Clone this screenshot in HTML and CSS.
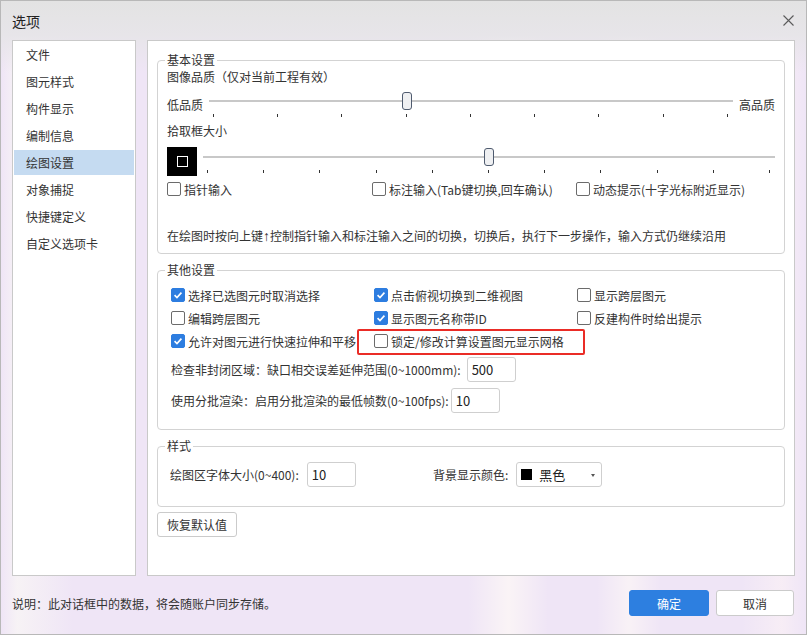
FILE: index.html
```html
<!DOCTYPE html>
<html lang="zh-CN">
<head>
    <meta charset="UTF-8">
    <title>选项</title>
    <link rel="stylesheet" href="styles.css">
</head>
<body>

    <div class="window">

        <div class="titlebar">
            <span class="title">选项</span>
            <svg class="close-icon" width="11" height="11" viewBox="0 0 11 11">
                <path d="M0.5 0.5 L10.5 10.5 M10.5 0.5 L0.5 10.5" stroke="#5a5a5a" stroke-width="1.1" fill="none"/>
            </svg>
        </div>

        <div class="main">
            <ul class="nav">
                <li class="nav-item">文件</li>
                <li class="nav-item">图元样式</li>
                <li class="nav-item">构件显示</li>
                <li class="nav-item">编制信息</li>
                <li class="nav-item active">绘图设置</li>
                <li class="nav-item">对象捕捉</li>
                <li class="nav-item">快捷键定义</li>
                <li class="nav-item">自定义选项卡</li>
            </ul>

            <div class="panel">

                <fieldset class="group">
                    <legend>基本设置</legend>
                    <div class="group-body basic-body">
                        <div class="caption">图像品质（仅对当前工程有效）</div>

                        <div class="slider-row">
                            <span class="slider-label">低品质</span>
                            <div class="slider">
                                <div class="track"></div>
                                <div class="ticks">
                                    <i></i><i></i><i></i><i></i><i></i><i></i><i></i><i></i><i></i>
                                </div>
                                <div class="thumb" style="left: calc((100% - 10px) * 0.375);"></div>
                            </div>
                            <span class="slider-label">高品质</span>
                        </div>

                        <div class="caption caption-pick">拾取框大小</div>

                        <div class="slider-row picker-row">
                            <div class="pick-preview"><span class="pick-square"></span></div>
                            <div class="slider">
                                <div class="track"></div>
                                <div class="ticks">
                                    <i></i><i></i><i></i><i></i><i></i><i></i><i></i><i></i><i></i><i></i><i></i>
                                </div>
                                <div class="thumb" style="left: calc((100% - 10px) * 0.5);"></div>
                            </div>
                        </div>

                        <div class="check-grid basic-checks">
                            <label class="check"><span class="box"></span>指针输入</label>
                            <label class="check"><span class="box"></span>标注输入(Tab键切换,回车确认)</label>
                            <label class="check"><span class="box"></span>动态提示(十字光标附近显示)</label>
                        </div>

                        <div class="hint">在绘图时按向上键<span class="arrow">↑</span>控制指针输入和标注输入之间的切换，切换后，执行下一步操作，输入方式仍继续沿用</div>
                    </div>
                </fieldset>

                <fieldset class="group">
                    <legend>其他设置</legend>
                    <div class="group-body other-body">
                        <div class="check-grid other-checks">
                            <label class="check"><span class="box checked"><svg viewBox="0 0 14 14"><polyline points="3,7.2 5.8,10 11,4.2"/></svg></span>选择已选图元时取消选择</label>
                            <label class="check"><span class="box checked"><svg viewBox="0 0 14 14"><polyline points="3,7.2 5.8,10 11,4.2"/></svg></span>点击俯视切换到二维视图</label>
                            <label class="check"><span class="box"></span>显示跨层图元</label>

                            <label class="check"><span class="box"></span>编辑跨层图元</label>
                            <label class="check"><span class="box checked"><svg viewBox="0 0 14 14"><polyline points="3,7.2 5.8,10 11,4.2"/></svg></span>显示图元名称带ID</label>
                            <label class="check"><span class="box"></span>反建构件时给出提示</label>

                            <label class="check"><span class="box checked"><svg viewBox="0 0 14 14"><polyline points="3,7.2 5.8,10 11,4.2"/></svg></span>允许对图元进行快速拉伸和平移</label>
                            <label class="check marked"><span class="box"></span>锁定/修改计算设置图元显示网格</label>
                        </div>

                        <div class="field-row field-row-1">
                            <span>检查非封闭区域：缺口相交误差延伸范围(0~1000mm):</span>
                            <input type="text" class="num-input" value="500">
                        </div>
                        <div class="field-row field-row-2">
                            <span>使用分批渲染：启用分批渲染的最低帧数(0~100fps):</span>
                            <input type="text" class="num-input" value="10">
                        </div>
                    </div>
                </fieldset>

                <fieldset class="group">
                    <legend>样式</legend>
                    <div class="group-body style-body">
                        <div class="field-row style-pair">
                            <span>绘图区字体大小(0~400):</span>
                            <input type="text" class="num-input" value="10">
                        </div>
                        <div class="field-row">
                            <span>背景显示颜色:</span>
                            <div class="combo">
                                <span class="swatch"></span>
                                <span class="combo-text">黑色</span>
                                <span class="combo-arrow"></span>
                            </div>
                        </div>
                    </div>
                </fieldset>

                <button class="btn reset-button">恢复默认值</button>

            </div>
        </div>

        <div class="footer">
            <span class="note">说明：此对话框中的数据，将会随账户同步存储。</span>
            <div class="actions">
                <button class="btn btn-primary">确定</button>
                <button class="btn btn-cancel">取消</button>
            </div>
        </div>

    </div>

</body>
</html>
```

FILE: styles.css
```css
body {
    margin: 0;
    font-family: "Noto Sans CJK SC", "Noto Sans", sans-serif;
    font-size: 12px;
    color: #333333;
}

.window {
    width: 807px;
    height: 635px;
    box-sizing: border-box;
    border: 1px solid #b8b8b8;
    background:
        linear-gradient(180deg, #e3e3e3 0, #e7e5e9 34px, rgba(239, 230, 246, 0) 72px),
        linear-gradient(90deg, rgba(255, 255, 255, 0) 0, rgba(250, 248, 245, 0.7) 2%, rgba(255, 255, 255, 0) 9%,
            rgba(255, 255, 255, 0) 58%, rgba(255, 250, 246, 0.7) 63%, rgba(255, 255, 255, 0) 68%,
            rgba(255, 255, 255, 0) 74%, rgba(255, 250, 246, 0.6) 78%, rgba(255, 255, 255, 0) 82%,
            rgba(255, 255, 255, 0) 92%, rgba(255, 245, 245, 0.5) 97%, rgba(255, 255, 255, 0) 100%),
        #efe5f6;
}

/* title bar */
.titlebar {
    height: 39px;
    display: flex;
    align-items: center;
    justify-content: space-between;
    padding: 0 12px 0 11px;
}

.title {
    font-size: 14px;
    color: #222222;
}

.close-icon {
    display: block;
}

/* main area */
.main {
    display: flex;
    gap: 11px;
    height: 536px;
    padding: 0 11px;
}

.nav {
    width: 124px;
    margin: 0;
    padding: 1px;
    list-style: none;
    box-sizing: border-box;
    background-color: #ffffff;
    border: 1px solid #c9c9c9;
}

.nav-item {
    height: 25px;
    line-height: 25px;
    padding-left: 12px;
    margin-bottom: 2px;
}

.nav-item.active {
    background-color: #c5dbf1;
}

.panel {
    flex: 1;
    box-sizing: border-box;
    background-color: #ffffff;
    border: 1px solid #c9c9c9;
    padding: 11px 9px 0 9px;
}

/* group boxes */
.group {
    margin: 0;
    padding: 0;
    min-width: 0;
    border: 1px solid #d3d3d3;
    border-radius: 4px;
}

.group + .group {
    margin-top: 8px;
}

.group legend {
    margin-left: 7px;
    padding: 0 2px;
    line-height: 16px;
    font-size: 12px;
}

.basic-body {
    padding: 0 9px 8px 9px;
}

.caption {
    line-height: 18px;
}

.caption-pick {
    margin-top: 4px;
}

/* sliders */
.slider-row {
    display: flex;
    align-items: center;
    gap: 6px;
    margin-top: 6px;
}

.slider-label {
    line-height: 18px;
    flex-shrink: 0;
}

.slider {
    flex: 1;
    position: relative;
    height: 26px;
}

.track {
    margin-top: 8px;
    height: 2px;
    background-color: #c8c8c8;
}

.ticks {
    display: flex;
    justify-content: space-between;
    margin-top: 12px;
    padding: 0 5px 0 4px;
}

.ticks i {
    display: block;
    width: 1px;
    height: 3px;
    background-color: #333333;
}

.thumb {
    position: absolute;
    top: 0;
    width: 10px;
    height: 18px;
    box-sizing: border-box;
    border: 1.5px solid #4f5b6f;
    border-radius: 3px;
    background-color: #eff0f2;
}

.picker-row {
    margin-top: 6px;
    height: 30px;
}

.pick-preview {
    width: 30px;
    height: 29px;
    background-color: #000000;
    display: flex;
    align-items: center;
    justify-content: center;
    flex-shrink: 0;
}

.pick-square {
    width: 9px;
    height: 9px;
    border: 1.5px solid #ffffff;
}

/* checkboxes */
.check-grid {
    display: grid;
    row-gap: 5px;
}

.basic-checks {
    grid-template-columns: 205px 204px 1fr;
    margin-top: 4px;
}

.other-checks {
    grid-template-columns: 203px 203px 1fr;
}

.check {
    display: flex;
    align-items: center;
    height: 18px;
    white-space: nowrap;
    position: relative;
}

.box {
    width: 14px;
    height: 14px;
    box-sizing: border-box;
    border: 1px solid #6b6b6b;
    border-radius: 2px;
    background-color: #ffffff;
    margin-right: 3px;
    flex-shrink: 0;
}

.box.checked {
    background-color: #2d7de0;
    border-color: #2d7de0;
}

.box svg {
    display: block;
    width: 12px;
    height: 12px;
}

.box polyline {
    fill: none;
    stroke: #ffffff;
    stroke-width: 1.9;
}

.check.marked::after {
    content: "";
    position: absolute;
    left: -17px;
    top: -3px;
    width: 228px;
    height: 26px;
    box-sizing: border-box;
    border: 2px solid #ea2c26;
    border-radius: 2px;
}

.hint {
    margin-top: 29px;
    line-height: 18px;
}

.arrow {
    font-family: "Liberation Sans", sans-serif;
    font-size: 14px;
    line-height: 1;
}

/* other settings */
.other-body {
    padding: 8px 9px 16px 13px;
}

.field-row {
    display: flex;
    align-items: center;
    gap: 3px;
    margin-top: 7px;
    white-space: nowrap;
}

.field-row-1 {
    gap: 6px;
}

.field-row-2 {
    margin-top: 6px;
    gap: 2px;
}

.num-input {
    width: 49px;
    height: 25px;
    box-sizing: border-box;
    border: 1px solid #cfcfcf;
    border-radius: 3px;
    padding: 0 4px;
    font-family: "Noto Sans CJK SC", "Noto Sans", sans-serif;
    font-size: 13px;
    color: #222222;
    background-color: #ffffff;
}

/* style */
.style-body {
    display: flex;
    padding: 8px 9px 19px 12px;
}

.style-body .field-row {
    margin-top: 0;
    gap: 8px;
}

.style-pair {
    width: 263px;
}

.combo {
    width: 86px;
    height: 25px;
    box-sizing: border-box;
    border: 1px solid #cfcfcf;
    border-radius: 3px;
    display: flex;
    align-items: center;
    padding: 0 0 0 4px;
    position: relative;
}

.swatch {
    width: 11px;
    height: 11px;
    background-color: #000000;
    margin-right: 7px;
}

.combo-text {
    font-size: 13px;
    color: #222222;
}

.combo-arrow {
    position: absolute;
    right: 6px;
    top: 11px;
    width: 0;
    height: 0;
    border-left: 2.5px solid transparent;
    border-right: 2.5px solid transparent;
    border-top: 3px solid #555555;
}

/* buttons */
.btn {
    font-family: "Noto Sans CJK SC", "Noto Sans", sans-serif;
    font-size: 12px;
    color: #333333;
    background-color: #ffffff;
    border: 1px solid #cbcbcb;
    border-radius: 3px;
    padding: 0;
    cursor: pointer;
    box-sizing: border-box;
}

.reset-button {
    margin-top: 5px;
    width: 80px;
    height: 25px;
}

.footer {
    display: flex;
    align-items: center;
    justify-content: space-between;
    padding: 14px 12px 0 11px;
}

.actions {
    display: flex;
    gap: 7px;
}

.btn-primary {
    width: 80px;
    height: 26px;
    background-color: #2d7fe0;
    border-color: #2d7fe0;
    color: #ffffff;
}

.btn-cancel {
    width: 78px;
    height: 26px;
}
```
